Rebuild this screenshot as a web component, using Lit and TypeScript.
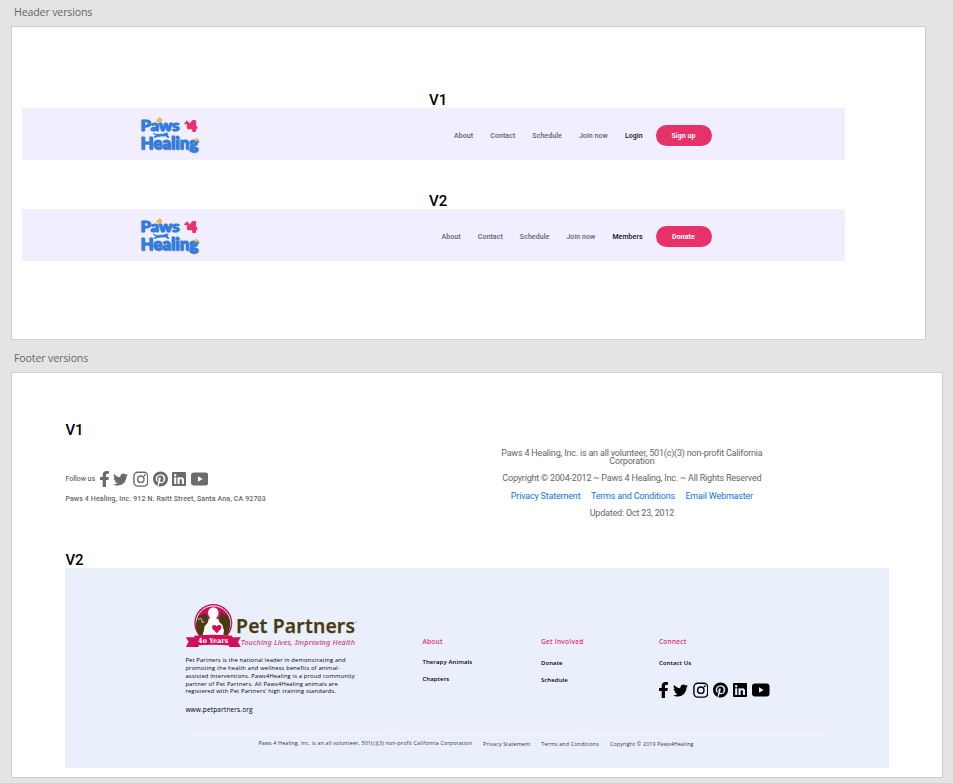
import { LitElement, html, css, svg } from "lit";
import { customElement, property } from "lit/decorators.js";

@customElement("paws-logo")
class PawsLogo extends LitElement {
  static styles = css`
    :host { display: block; width: 62px; height: 40px; }
    svg { display: block; overflow: visible; }
    text { font-family: Lato, sans-serif; font-weight: 900; stroke-linejoin: round; }
    .shade { fill: #8b97a8; stroke: #8b97a8; stroke-width: .5; }
    .blue { fill: #2f7de1; stroke: #2f7de1; stroke-width: .9; }
    .four { fill: #e8336a; stroke: #e8336a; stroke-width: 1.800; }
    .red { fill: #e8336a; }
    .gold { fill: #f2b84b; }
  `;
  render() {
    const words = (cls: string, d: number) => svg`
      <text class=${cls} x=${0.4 + d} y=${16.6 + d} font-size="15" textLength="39" lengthAdjust="spacingAndGlyphs">Paws</text>
      <text class=${cls} x=${0.4 + d} y=${35.2 + d} font-size="16" textLength="58" lengthAdjust="spacingAndGlyphs">Healing</text>`;
    return html`<svg width="62" height="40" viewBox="0 0 62 40">
      ${words("shade", 0.6)}
      ${words("blue", 0)}
      <path class="gold" d="M16.400 7.800c-.4-1.800.8-2.800 2.200-3.200l.8-2 1 1.500 1.700.4-.4 1.600.8 1.600-2.600.6zM53.300 26c.6-1 1.400-1.600 2.200-1.600l1.300-1.400.4 2 1.100.4-.4 2-2.400-.4z"/>
      <path class="blue" d="M13.400 19.200l1.500 1.200h3.200l6-.3 2.200-1.200 1.800.6-.8 1.500 1.600 2.600-1-.1-2.600-1.600-4.600.2-3.600.6-2.600.8-.2-.8 2-1.100-.9-1.300z"/>
      <text class="four" x="47.800" y="16.700" font-size="14" textLength="9" lengthAdjust="spacingAndGlyphs">4</text>
      <path class="red" d="M43.900 8.800l2-.6.6-2 1.700 1.200 1.500 2-.6 3.200-1.800-.3-.6-2.300-1.700.4z"/>
    </svg>`;
  }
}

@customElement("social-icons")
class SocialIcons extends LitElement {
  static styles = css`
    :host { display: flex; align-items: center; gap: 5px; height: 16px; }
    svg { display: block; flex: none; fill: currentColor; }
    .line { fill: none; stroke: currentColor; }
    .play { fill: var(--play, #fff); }
  `;
  render() {
    return html`
      <svg width="9" height="16" viewBox="22 0 276 512" preserveAspectRatio="none"><path d="M279.14 288l14.22-92.66h-88.91v-60.13c0-25.35 12.42-50.06 52.24-50.06h40.42V6.26S260.43 0 225.36 0c-73.22 0-121.08 44.38-121.08 124.72v70.62H22.89V288h81.39v224h100.17V288z"/></svg>
      <svg width="15" height="15" viewBox="0 0 512 512"><path d="M459.37 151.716c.325 4.548.325 9.097.325 13.645 0 138.72-105.583 298.558-298.558 298.558-59.452 0-114.68-17.219-161.137-47.106 8.447.974 16.568 1.299 25.34 1.299 49.055 0 94.213-16.568 130.274-44.832-46.132-.975-84.792-31.188-98.112-72.772 6.498.974 12.995 1.624 19.818 1.624 9.421 0 18.843-1.3 27.614-3.573-48.081-9.747-84.143-51.98-84.143-102.985v-1.299c13.969 7.797 30.214 12.67 47.431 13.319-28.264-18.843-46.781-51.005-46.781-87.391 0-19.492 5.197-37.36 14.294-52.954 51.655 63.675 129.3 105.258 216.365 109.807-1.624-7.797-2.599-15.918-2.599-24.04 0-57.828 46.782-104.934 104.934-104.934 30.213 0 57.502 12.67 76.67 33.137 23.715-4.548 46.456-13.32 66.599-25.34-7.798 24.366-24.366 44.833-46.132 57.827 21.117-2.273 41.584-8.122 60.426-16.243-14.292 20.791-32.161 39.308-52.628 54.253z"/></svg>
      <svg width="15.5" height="16" viewBox="0 0 15.5 16"><rect class="line" x=".9" y="1.3" width="13.8" height="13.8" rx="3.8" stroke-width="1.4"/><circle class="line" cx="7.8" cy="8.2" r="3.2" stroke-width="1.4"/><circle cx="11.7" cy="4.3" r="1"/></svg>
      <svg width="15" height="16" viewBox="0 0 496 512"><path d="M496 256c0 137-111 248-248 248-25.6 0-50.2-3.9-73.4-11.1 10.1-16.5 25.2-43.5 30.8-65 3-11.6 15.4-59 15.4-59 8.1 15.4 31.7 28.5 56.8 28.5 74.8 0 128.7-68.8 128.7-154.3 0-81.9-66.9-143.2-152.9-143.2-107 0-163.9 71.8-163.9 150.1 0 36.4 19.4 81.7 50.3 96.1 4.7 2.2 7.2 1.2 8.3-3.3.8-3.4 5-20.3 6.9-28.1.6-2.5.3-4.7-1.7-7.1-10.1-12.5-18.3-35.3-18.3-56.6 0-54.7 41.4-107.6 112-107.6 60.9 0 103.6 41.5 103.6 100.9 0 67.1-33.9 113.6-78 113.6-24.3 0-42.6-20.1-36.7-44.8 7-29.5 20.5-61.3 20.5-82.6 0-19-10.2-34.9-31.4-34.9-24.9 0-44.9 25.7-44.9 60.2 0 22 7.4 36.8 7.4 36.8s-24.5 103.8-29 123.2c-5 21.4-3 51.6-.9 71.2C65.4 450.9 0 361.1 0 256 0 119 111 8 248 8s248 111 248 248z"/></svg>
      <svg width="14" height="16" viewBox="0 0 448 512"><path d="M416 32H31.9C14.3 32 0 46.5 0 64.3v383.4C0 465.5 14.3 480 31.9 480H416c17.6 0 32-14.5 32-32.3V64.3c0-17.8-14.4-32.3-32-32.3zM135.4 416H69V202.2h66.5V416zm-33.2-243c-21.3 0-38.5-17.3-38.5-38.5S80.9 96 102.2 96c21.2 0 38.5 17.3 38.5 38.5 0 21.3-17.2 38.5-38.5 38.5zm282.1 243h-66.4V312c0-24.8-.5-56.7-34.5-56.7-34.6 0-39.9 27-39.9 54.9V416h-66.4V202.2h63.7v29.2h.9c8.9-16.8 30.6-34.5 62.9-34.5 67.2 0 79.7 44.3 79.7 101.9V416z"/></svg>
      <svg width="17.5" height="16" viewBox="0 0 17.5 16"><rect y="1.6" width="17.5" height="12.8" rx="3"/><path class="play" d="M7 5.3v5.4L11.6 8z"/></svg>
    `;
  }
}

@customElement("pet-partners-logo")
class PetPartnersLogo extends LitElement {
  static styles = css`
    :host { display: block; width: 172px; height: 46px; }
    svg { display: block; overflow: visible; }
    .name { font: 600 20px "Noto Sans", sans-serif; fill: #4b3a10; stroke: #4b3a10; stroke-width: .25; }
    .tag { font: italic 500 7.600px "Noto Sans", sans-serif; fill: #cf3d80; }
    .years { font: bold 7px "DejaVu Serif", serif; fill: #fff; }
    .pink { fill: #d0105a; }
    .dark { fill: #9d0c48; }
    .brown { fill: #4b3a10; }
    .white { fill: #fff; }
  `;
  render() {
    return html`<svg width="172" height="46" viewBox="-0.8 0 172 46">
      <circle class="pink" cx="27.500" cy="20" r="19"/>
      <circle cx="27.500" cy="20" r="17.100" fill="none" stroke="#fff" stroke-width="1"/>
      <path class="white" d="M27.500 4.600c3.300 0 5.200 2.400 5.200 5.300 0 2-.9 3.600-2.100 4.800l.2 1.400c4.500.4 5.400 3.300 6.200 7l3 11H15.300l3-11c.8-3.700 1-6.600 4.900-7l1.200-1.400c-1.200-1.200-2.100-2.800-2.100-4.800 0-2.900 1.900-5.300 5.200-5.300z"/>
      <path class="brown" d="M10.800 17.500l2.200-4.700 4-1 2.500-1.600 1.800 2.200 1.500 4.600-1.200 3.200-2.800 3-.6 4-1.600 5.200h-3.200c-3.200-4.600-4.100-9.600-2.600-14.900z"/>
      <path class="brown" d="M32.900 16.800l1.600-3.200.3-4.600 3.400 2.800 3.200-.2 2.600 5.200c1.200 5.400.2 10.600-2.800 15.200h-3.600l.6-5.200-1.600-5-2.800-2.200z"/>
      <path d="M12.400 17c1.800-2.600 4-1.700 3.600.6-.3 1.600.8 2.300 2.500 1.300" fill="none" stroke="#fff" stroke-width=".8"/>
      <path class="pink" d="M31 30.200l-3.900-4c-2.400-2.600 1-6.200 3.900-3 2.900-3.200 6.300.4 3.900 3z"/>
      <path class="dark" d="M8.600 41h4v3h-4zM43.500 41h4v3h-4z"/>
      <path class="pink" d="M0 34.300h9.300v9.600H0l2.800-4.800zM55 34.300h-9.300v9.600H55l-2.800-4.800z"/>
      <path class="pink" d="M8.500 32.700c13-1.300 25-1.300 38 0v10c-13-1.300-25-1.300-38 0z"/>
      <text class="years" x="12.500" y="39.500" textLength="30" lengthAdjust="spacingAndGlyphs">4o Years</text>
      <text class="name" x="50.300" y="29.500" textLength="119" lengthAdjust="spacingAndGlyphs">Pet Partners</text>
      <circle class="brown" cx="170.300" cy="19" r=".5"/>
      <text class="tag" x="55" y="42.300" textLength="114.500" lengthAdjust="spacingAndGlyphs">Touching Lives, Improving Health</text>
    </svg>`;
  }
}

@customElement("site-header")
class SiteHeader extends LitElement {
  @property() account = "";
  @property() action = "";
  static styles = css`
    :host { display: flex; align-items: center; width: 823px; height: 52px; background: #f0eeff; box-sizing: border-box; padding: 0 133.500px 0 118px; font: 500 7px "Roboto", sans-serif; color: #626262; }
    nav { display: flex; align-items: center; gap: 17px; margin-left: auto; white-space: nowrap; padding-top: 3px; letter-spacing: .08px; }
    .account { color: #111; }
    .action { display: flex; align-items: center; justify-content: center; width: 56px; height: 21.500px; border-radius: 11px; background: #e63169; color: #fff; font-weight: 700; margin-left: -4.200px; }
    paws-logo { margin-top: -1px; }
  `;
  render() {
    return html`<paws-logo></paws-logo>
      <nav>
        <span>About</span><span>Contact</span><span>Schedule</span><span>Join now</span>
        <span class="account">${this.account}</span>
        <span class="action">${this.action}</span>
      </nav>`;
  }
}

@customElement("app-root")
class AppRoot extends LitElement {
  static styles = css`
    :host { display: block; box-sizing: border-box; width: 953px; height: 783px; overflow: hidden; background: #e4e4e4; padding: 1px 0 0 11px; font-family: "Roboto", sans-serif; }
    .title { height: 25px; padding-left: 3px; box-sizing: border-box; font: 10.600px/22px "Open Sans", sans-serif; letter-spacing: -.14px; color: #666; }
    .board { background: #fff; border: 1px solid #cfcfcf; box-sizing: border-box; }
    .headers { width: 915px; height: 314px; padding: 64px 0 0 10px; }
    .footers { width: 932px; height: 406px; padding: 48px 0 0 53.400px; }
    .version { height: 17px; font: 500 15px/19px "Roboto", sans-serif; color: #000; }
    .headers .version { padding-left: 407px; }
    site-header { margin-bottom: 32px; }
    .second { margin-top: 7px; }

    .plain { display: flex; height: 113px; color: #666; }
    .left { width: 352px; padding-top: 33px; box-sizing: border-box; font-weight: 500; font-size: 7px; line-height: 10px; }
    .follow { display: flex; align-items: center; gap: 4.400px; color: #6b6b6b; }
    .follow social-icons { gap: 4.600px; }
    .address { margin-top: 7px; letter-spacing: .14px; }
    .right { width: 429px; text-align: center; font-size: 9px; line-height: 8px; letter-spacing: -.19px; padding-top: 11px; box-sizing: border-box; }
    .right p { margin: 0 0 9.300px; }
    .links { display: flex; justify-content: center; gap: 10.500px; color: #1473e6; }

    .panel { width: 823.500px; height: 200px; box-sizing: border-box; background: #eaf0fb; padding: 35px 0 0 120px; font-family: "Open Sans", sans-serif; --play: #eaf0fb; color: #000; }
    .cols { display: grid; grid-template-columns: 237px 118.500px 118px 1fr; height: 132px; }
    .about { font: 500 5.800px/7.850px "Open Sans", sans-serif; white-space: nowrap; letter-spacing: .16px; }
    .about p { margin: 8px 0 0; }
    .about .site { margin-top: 9.800px; font-size: 6.600px; letter-spacing: .1px; }
    .col { padding-top: 34.500px; font-size: 6px; line-height: 8px; font-weight: 600; letter-spacing: .1px; }
    .col .head { color: #e0306a; font-size: 6.500px; letter-spacing: .27px; margin-bottom: 13.500px; }
    .col:nth-child(2) .head { margin-bottom: 12.500px; }
    .col .item { margin-bottom: 9px; }
    .col social-icons { margin-top: 15px; }
    .legal { display: flex; width: 645px; box-sizing: border-box; border-top: 1px solid #f1f4fc; padding: 4px 0 0 73px; font-size: 5.300px; line-height: 8px; letter-spacing: .165px; white-space: nowrap; gap: 11px; color: #333; }
    .legal span:first-child { margin-top: -1px; }
  `;
  render() {
    return html`
      <div class="title">Header versions</div>
      <section class="board headers">
        <div class="version">V1</div>
        <site-header account="Login" action="Sign up"></site-header>
        <div class="version">V2</div>
        <site-header account="Members" action="Donate"></site-header>
      </section>
      <div class="title second">Footer versions</div>
      <section class="board footers">
        <div class="version">V1</div>
        <div class="plain">
          <div class="left">
            <div class="follow"><span>Follow us</span><social-icons></social-icons></div>
            <div class="address">Paws 4 Healing, Inc. 912 N. Raitt Street, Santa Ana, CA 92703</div>
          </div>
          <div class="right">
            <p>Paws 4 Healing, Inc. is an all volunteer, 501(c)(3) non-profit California<br>Corporation</p>
            <p>Copyright © 2004-2012 ~ Paws 4 Healing, Inc. ~ All Rights Reserved</p>
            <p class="links"><span>Privacy Statement</span><span>Terms and Conditions</span><span>Email Webmaster</span></p>
            <p>Updated: Oct 23, 2012</p>
          </div>
        </div>
        <div class="version">V2</div>
        <footer class="panel">
          <div class="cols">
            <div class="about">
              <pet-partners-logo></pet-partners-logo>
              <p>Pet Partners is the national leader in demonstrating and<br>promoting the health and wellness benefits of animal-<br>assisted interventions. Paws4Healing is a proud community<br>partner of Pet Partners. All Paws4Healing animals are<br>registered with Pet Partners’ high training standards.</p>
              <p class="site">www.petpartners.org</p>
            </div>
            <div class="col"><div class="head">About</div><div class="item">Therapy Animals</div><div class="item">Chapters</div></div>
            <div class="col"><div class="head">Get Involved</div><div class="item">Donate</div><div class="item">Schedule</div></div>
            <div class="col"><div class="head">Connect</div><div class="item">Contact Us</div><social-icons></social-icons></div>
          </div>
          <div class="legal"><span>Paws 4 Healing, Inc. is an all volunteer, 501(c)(3) non-profit California Corporation</span><span>Privacy Statement</span><span>Terms and Conditions</span><span>Copyright © 2019 Paws4Healing</span></div>
        </footer>
      </section>`;
  }
}
